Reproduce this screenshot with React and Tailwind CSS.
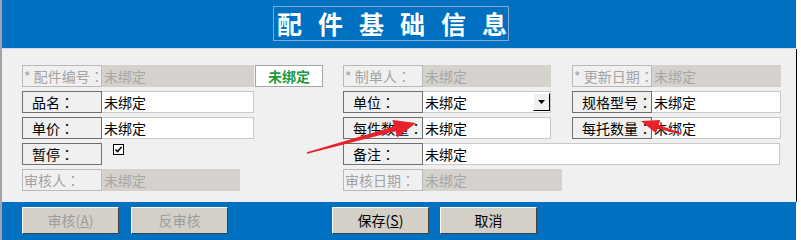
const font = { fontFamily: '"Microsoft YaHei", "Noto Sans CJK SC", "Noto Sans", sans-serif' };
const colonFont = { fontFamily: '"Noto Sans CJK TC", "Noto Sans CJK SC", sans-serif' };

function Label({ text, disabled }) {
  return (
    <div
      className={
        "flex h-[22px] w-[80px] shrink-0 items-center whitespace-nowrap border bg-[#f0f0f0] text-[14px] " +
        (disabled ? "border-[#b9b9b9] pl-[1px] text-[#a3a3a3]" : "border-[#6f6f6f] pl-[9px] text-black")
      }
    >
      {text}
      <span style={colonFont}>：</span>
    </div>
  );
}

function Value({ w, disabled, children }) {
  return (
    <div
      className={
        "relative flex h-[22px] shrink-0 items-center pl-[2px] text-[14px] " +
        (disabled ? "bg-[#d5d2cd] text-[#a6a6a6]" : "border border-l-0 border-[#c9c9c9] bg-white text-black")
      }
      style={{ width: w }}
    >
      未绑定
      {children}
    </div>
  );
}

function Dropdown() {
  return (
    <div className="absolute right-0 top-[1px] flex h-[18px] w-[17px] items-center justify-center border border-b-black border-r-black border-l-white border-t-white bg-[#f0f0f0]">
      <svg width="7" height="4" viewBox="0 0 7 4"><path d="M0 0h7L3.5 4z" fill="#000" /></svg>
    </div>
  );
}

function Btn({ label, hot, disabled }) {
  return (
    <button
      className={
        "flex h-[27px] w-[97px] items-center justify-center border border-b-[#404040] border-r-[#404040] border-l-white border-t-white bg-[#d4d0c8] text-[14px] " +
        (disabled ? "text-[#9c9c9c]" : "text-black")
      }
    >
      {label}
      {hot && (
        <>
          (<span className="underline">{hot}</span>)
        </>
      )}
    </button>
  );
}

export default function App() {
  return (
    <div className="relative flex h-[240px] w-[801px] overflow-hidden bg-white" style={font}>
      <div className="w-[2px] shrink-0 bg-[#a3a3ad]" />
      <div className="flex w-[795px] flex-col">
        <header className="flex h-[49px] w-[794px] border-b border-[#d2dce8] bg-[#0070c0] pl-[271px] pt-[6px]">
          <div className="flex h-[35px] w-[236px] items-center whitespace-nowrap border border-[#82a9d4] pl-[3px] text-[25px] font-bold tracking-[16px] text-white">
            配件基础信息
          </div>
        </header>

        <main className="flex h-[153px] flex-col gap-[4px] border-r border-black bg-[#f0f0f0] pl-[20px] pt-[16px]">
          <div className="flex">
            <div className="flex w-[321px]">
              <Label text="* 配件编号" disabled />
              <Value w={152} disabled />
              <div className="ml-[1px] flex h-[22px] w-[68px] items-center justify-center border border-[#a5a5a5] bg-white text-[14px] font-bold text-[#229a3c]">
                未绑定
              </div>
            </div>
            <div className="flex w-[229px]">
              <Label text="* 制单人" disabled />
              <Value w={128} disabled />
            </div>
            <div className="flex">
              <Label text="* 更新日期" disabled />
              <Value w={129} disabled />
            </div>
          </div>

          <div className="flex">
            <div className="flex w-[321px]">
              <Label text="品名" />
              <Value w={152} />
            </div>
            <div className="flex w-[229px]">
              <Label text="单位" />
              <Value w={128}>
                <Dropdown />
              </Value>
            </div>
            <div className="flex">
              <Label text="规格型号" />
              <Value w={129} />
            </div>
          </div>

          <div className="flex">
            <div className="flex w-[321px]">
              <Label text="单价" />
              <Value w={152} />
            </div>
            <div className="flex w-[229px]">
              <Label text="每件数量" />
              <Value w={128} />
            </div>
            <div className="flex">
              <Label text="每托数量" />
              <Value w={129} />
            </div>
          </div>

          <div className="flex">
            <div className="flex w-[321px]">
              <Label text="暂停" />
              <div className="ml-[11px] mt-[1px] flex h-[11px] w-[11px] items-center justify-center border border-black bg-white">
                <svg width="9" height="9" viewBox="0 0 9 9"><path d="M1.5 4.5l2 2 4-4.5" fill="none" stroke="#000" strokeWidth="1.6" /></svg>
              </div>
            </div>
            <div className="flex">
              <Label text="备注" />
              <Value w={357} />
            </div>
          </div>

          <div className="flex">
            <div className="flex w-[321px]">
              <Label text="审核人" disabled />
              <Value w={138} disabled />
            </div>
            <div className="flex">
              <Label text="审核日期" disabled />
              <Value w={139} disabled />
            </div>
          </div>
        </main>

        <footer className="flex h-[38px] w-[794px] gap-[12px] bg-[#0070c0] pl-[20px] pt-[5px]">
          <Btn label="审核" hot="A" disabled />
          <Btn label="反审核" disabled />
          <div className="ml-[92px] flex gap-[11px]">
            <Btn label="保存" hot="S" />
            <Btn label="取消" />
          </div>
        </footer>
      </div>

      <svg className="pointer-events-none absolute left-0 top-0" width="801" height="240">
        <polygon
          points="306.8,152.2 394.1,126.4 392.4,120.1 416,123 397.2,137.5 395.5,131.2 307.2,153.8"
          fill="#e8222b"
        />
        <polygon
          points="681.2,133.2 658.7,124.7 660.3,119.9 641,121 655.9,133.3 657.5,128.5 680.8,134.8"
          fill="#e8222b"
        />
      </svg>
    </div>
  );
}
